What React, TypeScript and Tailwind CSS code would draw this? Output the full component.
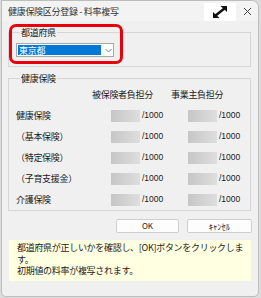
import React from 'react';

const rows = ['健康保険', '（基本保険）', '（特定保険）', '（子育支援金）', '介護保険'];

const RateBox = () => (
  <div className="h-[12px] w-[29px] bg-linear-to-r from-[#c6c6c6] to-[#dedede]" />
);

const App = () => {
  return (
    <div className="relative h-[298px] w-[261px] bg-[#dcdcdc] font-['Noto_Sans_CJK_JP',sans-serif] text-[9px] leading-[9px] tracking-[-0.3px] text-[#1a1a1a]">
      <div className="ml-[1px] flex h-[297px] w-[258px] flex-col rounded-tr-[7px] rounded-b-[5px] border border-[#bdbdbd] bg-[#f0f0f0]">
        {/* title bar */}
        <div className="flex h-[20px] items-center rounded-tr-[7px] bg-[#f3f3f3]">
          <span className="pl-[6px] text-[#333]">健康保険区分登録 - 料率複写</span>
          <div className="ml-auto mt-[1px] flex h-[18px] w-[32px] items-center justify-center bg-white">
            <svg width="18" height="16" viewBox="0 0 18 16">
              <path d="M4 12 L14 4" stroke="#111" strokeWidth="2.4" />
              <path d="M9.5 2 L16 2 L16 8 Z" fill="#111" />
              <path d="M2 14 L2 8 L8.5 14 Z" fill="#111" />
            </svg>
          </div>
          <div className="flex w-[22px] items-center justify-center">
            <svg width="9" height="9" viewBox="0 0 9 9">
              <path d="M1 1 L8 8 M8 1 L1 8" stroke="#444" strokeWidth="1" />
            </svg>
          </div>
        </div>

        {/* prefecture */}
        <fieldset className="ml-[6px] mt-[7px] w-[243px] border border-[#d6d6d6] pb-[9px] pl-[7px]">
          <legend className="ml-[4px] px-[1px] leading-[9px]">都道府県</legend>
          <div className="mt-[6px] flex h-[14px] w-[98px] items-center border border-[#a8a8a8] bg-white">
            <div className="ml-[1px] flex h-[10px] w-[83px] items-center bg-[#0078d7] pl-[1px] text-white">東京都</div>
            <svg className="ml-[4px]" width="7" height="5" viewBox="0 0 7 5">
              <path d="M0.5 1 L3.5 4 L6.5 1" stroke="#777" strokeWidth="0.9" fill="none" />
            </svg>
          </div>
        </fieldset>

        {/* health insurance */}
        <fieldset className="ml-[6px] mt-[7px] w-[243px] border border-[#d6d6d6] pl-[7px] pt-[1px]">
          <legend className="ml-[4px] px-[1px] leading-[9px]">健康保険</legend>
          <div className="flex h-[21px] items-center">
            <span className="ml-[76px] w-[79px]">被保険者負担分</span>
            <span>事業主負担分</span>
          </div>
          {rows.map(r => (
            <div key={r} className="flex h-[21px] items-center">
              <span className="w-[95px]">{r}</span>
              <RateBox />
              <span className="ml-[2px] w-[46px] font-['Liberation_Sans',sans-serif] text-[8.5px] tracking-normal">/1000</span>
              <RateBox />
              <span className="ml-[2px] font-['Liberation_Sans',sans-serif] text-[8.5px] tracking-normal">/1000</span>
            </div>
          ))}
        </fieldset>

        {/* buttons */}
        <div className="ml-[114px] mt-[8px] flex gap-[8px]">
          <button className="h-[14px] w-[63px] rounded-[2px] border border-[#cfcfcf] bg-[#fdfdfd] text-[8px] leading-[12px] tracking-normal">OK</button>
          <button className="h-[14px] w-[65px] rounded-[2px] border border-[#cfcfcf] bg-[#fdfdfd] text-[8.5px] leading-[12px] tracking-normal">ｷｬﾝｾﾙ</button>
        </div>

        {/* info */}
        <div className="ml-[7px] mt-[7px] h-[41px] w-[242px] bg-[#ffffe1] pl-[8px] pt-[2px] leading-[11.5px] whitespace-nowrap">
          都道府県が正しいかを確認し、[OK]ボタンをクリックしま
          <br />
          す。
          <br />
          初期値の料率が複写されます。
        </div>
      </div>

      {/* red annotation */}
      <div className="absolute left-[9px] top-[24px] h-[40px] w-[114px] rounded-[7px] border-[3px] border-[#e8000b]" />
    </div>
  );
};

export default App;
